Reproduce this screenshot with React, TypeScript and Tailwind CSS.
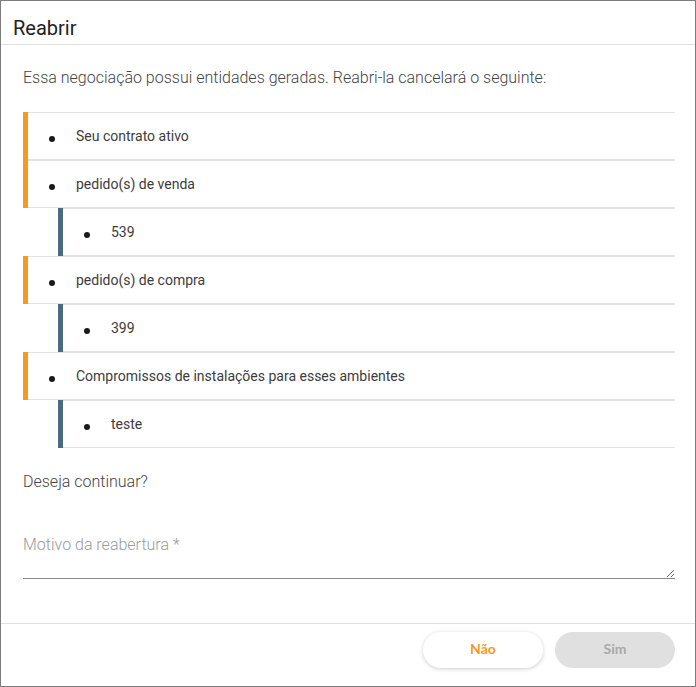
type Item = { label: string; level: 1 | 2 };

const items: Item[] = [
  { label: 'Seu contrato ativo', level: 1 },
  { label: 'pedido(s) de venda', level: 1 },
  { label: '539', level: 2 },
  { label: 'pedido(s) de compra', level: 1 },
  { label: '399', level: 2 },
  { label: 'Compromissos de instalações para esses ambientes', level: 1 },
  { label: 'teste', level: 2 },
];

const Row = ({ item }: { item: Item }) => (
  <div className={`flex h-[48px] ${item.level === 2 ? 'pl-[35px]' : ''}`}>
    <div className={`w-[5px] shrink-0 ${item.level === 1 ? 'bg-[#f7991f]' : 'bg-[#4b6a80]'}`} />
    <div className="flex flex-1 items-center border-y border-[#e2e2e2]">
      <span className="ml-[21px] mt-[5px] h-[6px] w-[6px] shrink-0 rounded-full bg-[#1a1a1a]" />
      <span className="ml-[21px] text-[14px] text-[#3c3c3c]">{item.label}</span>
    </div>
  </div>
);

export default function App() {
  return (
    <div
      className="flex h-[687px] w-[696px] flex-col border border-[#7d7d7d] bg-white"
      style={{ fontFamily: 'Roboto, "Liberation Sans", sans-serif' }}
    >
      <div className="flex h-[44px] shrink-0 items-center border-b border-[#e0e0e0] pl-[12px] pt-[11px]">
        <h1 className="text-[20px] leading-[24px] text-[#222]">Reabrir</h1>
      </div>

      <div className="flex flex-1 flex-col pl-[22px] pr-[20px] pt-[23px]">
        <p className="text-[16px] font-light leading-[20px] text-[#444]">
          Essa negociação possui entidades geradas. Reabri-la cancelará o seguinte:
        </p>

        <div className="mt-[24px]">
          {items.map((item, i) => (
            <Row key={i} item={item} />
          ))}
        </div>

        <p className="mt-[24px] text-[16px] font-light leading-[20px] text-[#444]">Deseja continuar?</p>

        <textarea
          placeholder="Motivo da reabertura *"
          className="mt-[39px] h-[48px] w-full border-b border-[#8a8a8a] pt-[2px] text-[16px] font-light leading-[24px] text-[#333] outline-none placeholder:text-[#9a9a9a]"
        />
      </div>

      <div className="flex shrink-0 justify-end gap-[12px] border-t border-[#e0e0e0] pb-[18px] pr-[20px] pt-[8px]">
        <button
          className="h-[36px] w-[120px] rounded-full bg-white pb-[3px] text-[14px] font-bold text-[#f7991f] shadow-[0_1px_4px_rgba(0,0,0,0.2)]"
          style={{ fontFamily: 'Lato, "Liberation Sans", sans-serif' }}
        >
          Não
        </button>
        <button
          className="h-[36px] w-[120px] rounded-full bg-[#e0e0e0] pb-[3px] text-[14px] font-bold text-[#a9a9a9]"
          style={{ fontFamily: 'Lato, "Liberation Sans", sans-serif' }}
        >
          Sim
        </button>
      </div>
    </div>
  );
}
